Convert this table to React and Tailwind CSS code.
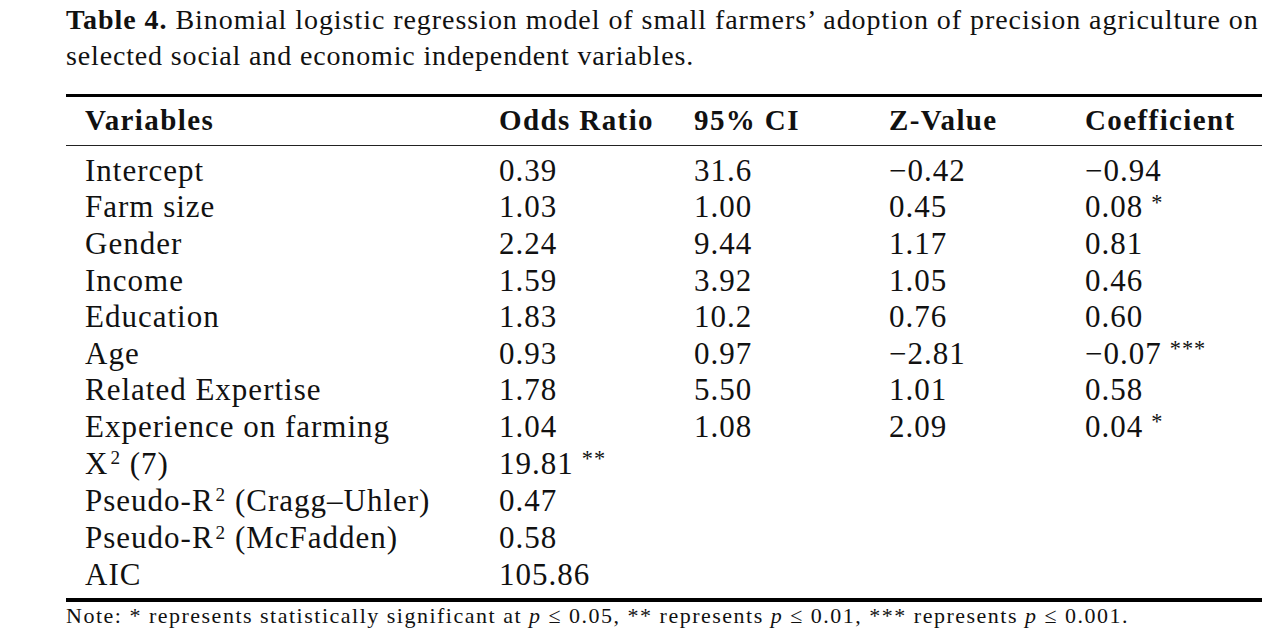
import React from 'react';

const rows = [
  ['Intercept', '0.39', '31.6', '\u22120.42', '\u22120.94'],
  ['Farm size', '1.03', '1.00', '0.45', '0.08', '*'],
  ['Gender', '2.24', '9.44', '1.17', '0.81'],
  ['Income', '1.59', '3.92', '1.05', '0.46'],
  ['Education', '1.83', '10.2', '0.76', '0.60'],
  ['Age', '0.93', '0.97', '\u22122.81', '\u22120.07', '***'],
  ['Related Expertise', '1.78', '5.50', '1.01', '0.58'],
  ['Experience on farming', '1.04', '1.08', '2.09', '0.04', '*'],
];

const Sup = ({ children }) => <sup className="text-[0.62em] top-[-0.5em] ml-[2px]">{children}</sup>;
const Star = ({ children }) => <span className="ml-[8px] text-[0.72em] align-[0.35em]">{children}</span>;

const stats = [
  [<>X<Sup>2</Sup> (7)</>, <>19.81<Star>**</Star></>],
  [<>Pseudo-R<Sup>2</Sup> (Cragg–Uhler)</>, '0.47'],
  [<>Pseudo-R<Sup>2</Sup> (McFadden)</>, '0.58'],
  ['AIC', '105.86'],
];

const grid = 'grid grid-cols-[414px_195px_195px_196px_196px] pl-[19px]';

export default function App() {
  return (
    <div className="w-[1280px] h-[635px] bg-white text-[#111] overflow-hidden" style={{ fontFamily: '"Liberation Serif", serif' }}>
      <div className="ml-[66px] w-[1196px] pt-[2px]">
        <p className="text-[28px] leading-[36px] tracking-[0.95px] whitespace-nowrap">
          <span className="font-bold">Table 4.</span> Binomial logistic regression model of small farmers’ adoption of precision agriculture on
          <br />
          <span className="tracking-[0.85px]">selected social and economic independent variables.</span>
        </p>
        <div className="mt-[20px] border-t-[3px] border-black">
          <div className={`${grid} h-[49px] items-center border-b border-[#222] text-[29px] font-bold tracking-[1.4px]`}>
            <span>Variables</span>
            <span>Odds Ratio</span>
            <span>95% CI</span>
            <span>Z-Value</span>
            <span>Coefficient</span>
          </div>
          <div className="pt-[6px] pb-[4px] text-[31px] tracking-[1px]">
            {rows.map((r) => (
              <div key={r[0]} className={`${grid} h-[36.6px] items-center leading-none`}>
                <span>{r[0]}</span>
                <span>{r[1]}</span>
                <span>{r[2]}</span>
                <span>{r[3]}</span>
                <span>{r[4]}{r[5] && <Star>{r[5]}</Star>}</span>
              </div>
            ))}
            {stats.map((r, i) => (
              <div key={i} className={`${grid} h-[37.2px] items-center leading-none`}>
                <span>{r[0]}</span>
                <span>{r[1]}</span>
              </div>
            ))}
          </div>
          <div className="border-t-[4px] border-black">
            <p className="text-[22px] leading-[26px] pt-[1px] tracking-[1.5px] whitespace-nowrap">
              Note: * represents statistically significant at <i>p</i> ≤ 0.05, ** represents <i>p</i> ≤ 0.01, *** represents <i>p</i> ≤ 0.001.
            </p>
          </div>
        </div>
      </div>
    </div>
  );
}
